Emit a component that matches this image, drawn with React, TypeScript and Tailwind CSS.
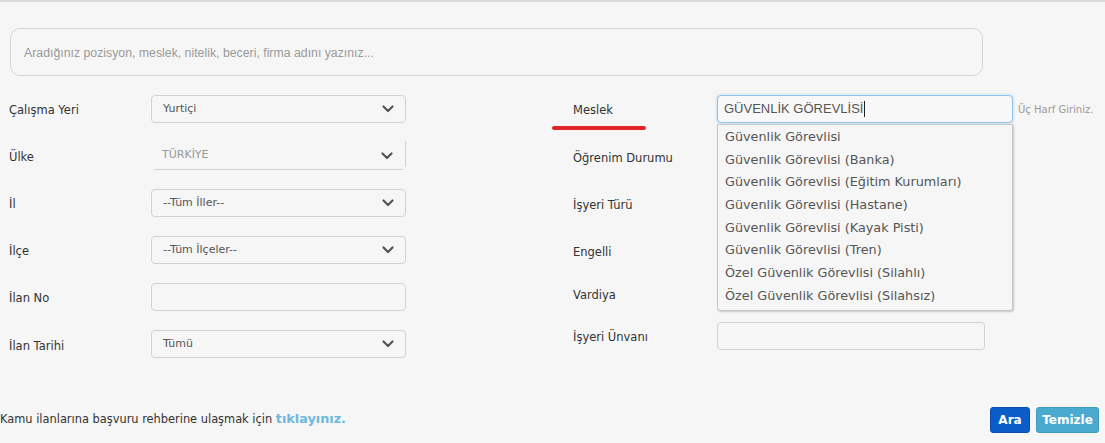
import React from "react";

const Chevron = () => (
  <svg width="12" height="8" viewBox="0 0 12 8" className="shrink-0">
    <path d="M1.5 1.5 L6 6 L10.5 1.5" fill="none" stroke="#555" strokeWidth="2.2" strokeLinecap="round" strokeLinejoin="round" />
  </svg>
);

const Select = ({ value }: { value: string }) => (
  <div className="flex h-[28px] w-[255px] items-center justify-between rounded-[4px] border border-[#d2d2d2] bg-[#f6f6f6] pl-[11px] pr-[11px]">
    <span className="text-[11px] text-[#555]">{value}</span>
    <Chevron />
  </div>
);

const labelCls = "text-[11.5px] text-[#333] w-[142px] shrink-0 pt-[4px]";
const rLabelCls = "text-[11.5px] text-[#333] w-[165px] shrink-0 pl-[21px] pt-[3px]";

const items = [
  "Güvenlik Görevlisi",
  "Güvenlik Görevlisi (Banka)",
  "Güvenlik Görevlisi (Eğitim Kurumları)",
  "Güvenlik Görevlisi (Hastane)",
  "Güvenlik Görevlisi (Kayak Pisti)",
  "Güvenlik Görevlisi (Tren)",
  "Özel Güvenlik Görevlisi (Silahlı)",
  "Özel Güvenlik Görevlisi (Silahsız)",
];

export default function App() {
  return (
    <div className="h-[443px] w-[1105px] overflow-hidden border-t-2 border-[#d9d9d9] bg-[#f6f6f6] [font-family:'DejaVu_Sans',sans-serif]">
      <div className="pl-[10px] pr-[122px] pt-[26px]">
        <div className="flex h-[48px] items-center rounded-[10px] border border-[#d6d6d6] bg-[#f6f6f6] pl-[13px] pt-[2px]">
          <span className="text-[12.3px] text-[#9a9a9a] [font-family:'Liberation_Sans',sans-serif]">
            Aradığınız pozisyon, meslek, nitelik, beceri, firma adını yazınız...
          </span>
        </div>
      </div>

      <div className="mt-[19px] flex">
        {/* left column */}
        <div className="flex w-[552px] flex-col gap-[19px] pl-[9px]">
          <div className="flex items-center">
            <span className={labelCls}>Çalışma Yeri</span>
            <Select value="Yurtiçi" />
          </div>
          <div className="flex items-center">
            <span className={labelCls}>Ülke</span>
            <div className="relative ml-[3px] flex h-[28px] w-[249px] items-center justify-between border-b border-[#d2d2d2] pl-[8px] pr-[10px]">
              <span className="text-[11px] text-[#999]">TÜRKİYE</span>
              <Chevron />
              <div className="absolute right-[-3px] top-[-1px] h-[26px] w-px bg-[#d2d2d2]" />
            </div>
          </div>
          <div className="flex items-center">
            <span className={labelCls}>İl</span>
            <Select value="--Tüm İller--" />
          </div>
          <div className="flex items-center">
            <span className={labelCls}>İlçe</span>
            <Select value="--Tüm İlçeler--" />
          </div>
          <div className="flex items-center">
            <span className={labelCls}>İlan No</span>
            <div className="h-[28px] w-[255px] rounded-[4px] border border-[#d2d2d2] bg-[#f6f6f6]" />
          </div>
          <div className="flex items-center">
            <span className={labelCls + " !pt-[6px]"}>İlan Tarihi</span>
            <Select value="Tümü" />
          </div>
        </div>

        {/* right column */}
        <div className="flex flex-col">
          <div className="relative flex h-[28px] items-center">
            <span className={rLabelCls}>Meslek</span>
            <div className="relative">
              <div className="flex h-[28px] w-[296px] items-center rounded-[4px] border border-[#8cc3ea] bg-[#f8f8f8] pl-[6px] shadow-[0_0_3px_rgba(102,175,233,0.5)]">
                <span className="text-[13px] text-[#555] [font-family:'Liberation_Sans',sans-serif]">GÜVENLİK GÖREVLİSİ</span>
                <span className="ml-[1px] h-[16px] w-px bg-[#222]" />
              </div>
              <div className="absolute left-0 top-[29px] z-10 w-[296px] rounded-b-[3px] border border-[#c6c6c6] bg-[#f6f6f6] pt-[1px] pb-[2px] shadow-[1px_1px_2px_rgba(0,0,0,0.2)]">
                {items.map((t) => (
                  <div key={t} className="h-[22.7px] pl-[7px] text-[12.8px] leading-[22.7px] text-[#555]">
                    {t}
                  </div>
                ))}
              </div>
            </div>
            <span className="ml-[5px] text-[10px] text-[#999]">Üç Harf Giriniz.</span>
            <div className="absolute left-0 top-[31px] h-[4px] w-[94px] rounded-full bg-[#e3262a]" />
          </div>
          <div className="mt-[20px] flex h-[28px] items-center">
            <span className={rLabelCls}>Öğrenim Durumu</span>
          </div>
          <div className="mt-[19px] flex h-[28px] items-center">
            <span className={rLabelCls}>İşyeri Türü</span>
          </div>
          <div className="mt-[19px] flex h-[28px] items-center">
            <span className={rLabelCls}>Engelli</span>
          </div>
          <div className="mt-[15px] flex h-[28px] items-center">
            <span className={rLabelCls}>Vardiya</span>
          </div>
          <div className="mt-[14px] flex h-[28px] items-center">
            <span className={rLabelCls}>İşyeri Ünvanı</span>
            <div className="h-[28px] w-[268px] rounded-[4px] border border-[#d2d2d2] bg-[#f6f6f6]" />
          </div>
        </div>
      </div>

      <div className="mt-[47px] flex items-center justify-between pr-[6px]">
        <div className="text-[11.4px] text-[#333]">
          Kamu ilanlarına başvuru rehberine ulaşmak için{" "}
          <span className="text-[12.8px] font-bold text-[#6cb8de]">tıklayınız.</span>
        </div>
        <div className="mt-[2px] flex gap-[6px]">
          <button className="h-[26px] w-[40px] rounded-[3px] border border-[#0a4fb0] bg-[#0a5cc8] text-[12px] font-bold text-white">
            Ara
          </button>
          <button className="h-[26px] w-[63px] rounded-[3px] border border-[#3f9cc0] bg-[#4aaad0] text-[12px] font-semibold text-white">
            Temizle
          </button>
        </div>
      </div>
    </div>
  );
}
